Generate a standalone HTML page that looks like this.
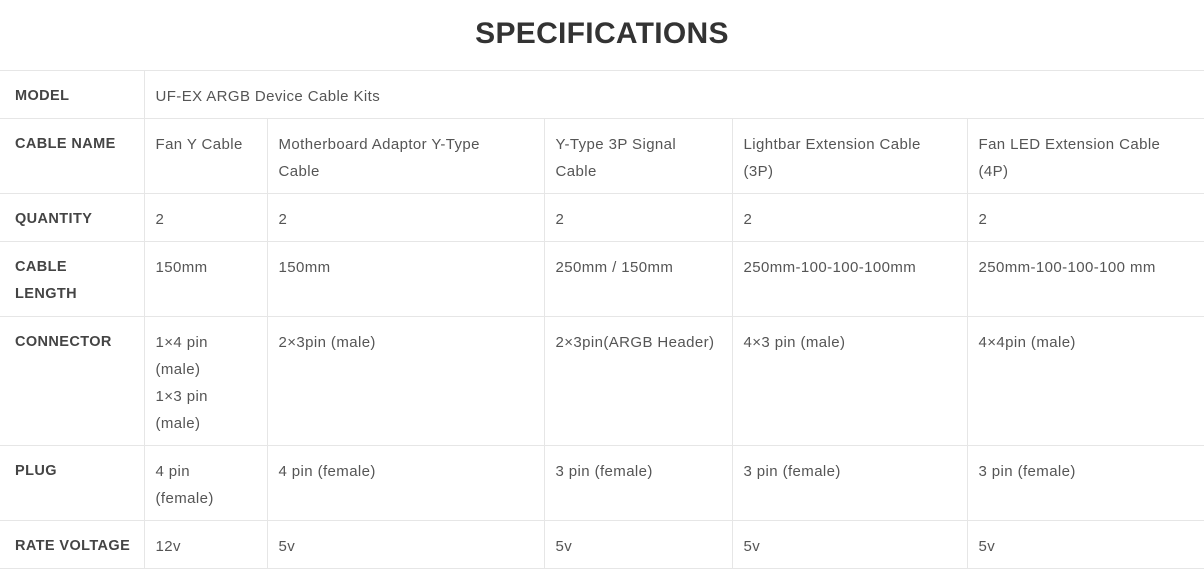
<!DOCTYPE html>
<html><head><style>
body{margin:0;background:#fff;font-family:"Liberation Sans",sans-serif;width:1204px;height:570px;overflow:hidden}
h1{margin:0;position:absolute;top:17px;left:0;width:1204px;text-align:center;font-size:30px;font-weight:bold;color:#333;letter-spacing:0.3px}
table{position:absolute;top:70px;left:0;border-collapse:collapse;table-layout:fixed;width:1205px}
td{border:1px solid #e6e6e6;vertical-align:top;padding:12px 10px 8px 11px;font-size:15px;line-height:27px;color:#555;white-space:nowrap;letter-spacing:0.4px}
td.h{font-weight:bold;color:#444;padding-left:15px;font-size:14.5px;letter-spacing:0.4px}
td:first-child{border-left:none}
</style></head><body>
<h1>SPECIFICATIONS</h1>
<table>
<colgroup><col style="width:144px"><col style="width:123px"><col style="width:277px"><col style="width:188px"><col style="width:235px"><col style="width:238px"></colgroup>
<tr style="height:48px"><td class="h">MODEL</td><td colspan="5">UF-EX ARGB Device Cable Kits</td></tr>
<tr style="height:75px"><td class="h">CABLE NAME</td><td>Fan Y Cable</td><td>Motherboard Adaptor Y-Type<br>Cable</td><td>Y-Type 3P Signal<br>Cable</td><td>Lightbar Extension Cable<br>(3P)</td><td>Fan LED Extension Cable<br>(4P)</td></tr>
<tr style="height:48px"><td class="h">QUANTITY</td><td>2</td><td>2</td><td>2</td><td>2</td><td>2</td></tr>
<tr style="height:75px"><td class="h">CABLE<br>LENGTH</td><td>150mm</td><td>150mm</td><td>250mm / 150mm</td><td>250mm-100-100-100mm</td><td>250mm-100-100-100 mm</td></tr>
<tr style="height:129px"><td class="h">CONNECTOR</td><td>1×4 pin<br>(male)<br>1×3 pin<br>(male)</td><td>2×3pin (male)</td><td>2×3pin(ARGB Header)</td><td>4×3 pin (male)</td><td>4×4pin (male)</td></tr>
<tr style="height:75px"><td class="h">PLUG</td><td>4 pin<br>(female)</td><td>4 pin (female)</td><td>3 pin (female)</td><td>3 pin (female)</td><td>3 pin (female)</td></tr>
<tr style="height:48px"><td class="h">RATE VOLTAGE</td><td>12v</td><td>5v</td><td>5v</td><td>5v</td><td>5v</td></tr>
</table>
</body></html>
